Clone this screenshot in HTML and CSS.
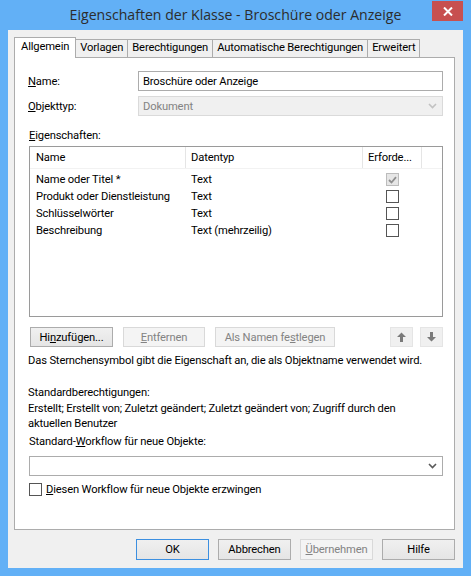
FILE: index.html
```html
<!DOCTYPE html>
<html lang="de">
<head>
<meta charset="utf-8">
<title>Eigenschaften der Klasse</title>
<link rel="stylesheet" href="styles.css">
</head>
<body>
<div class="window">
  <div class="titlebar">
    <div class="title">Eigenschaften der Klasse - Broschüre oder Anzeige</div>
    <div class="close">
      <svg width="10" height="9" viewBox="0 0 10 9"><path d="M1 0.5 L9 8.5 M9 0.5 L1 8.5" stroke="#fff" stroke-width="2"/></svg>
    </div>
  </div>
  <div class="client">
    <div class="tabs">
      <div class="tab active">Allgemein</div>
      <div class="tab">Vorlagen</div>
      <div class="tab">Berechtigungen</div>
      <div class="tab">Automatische Berechtigungen</div>
      <div class="tab">Erweitert</div>
    </div>
    <div class="panel">
      <div class="form-grid">
        <div class="label"><u>N</u>ame:</div>
        <div class="textbox">Broschüre oder Anzeige</div>
        <div class="label"><u>O</u>bjekttyp:</div>
        <div class="combo disabled"><span>Dokument</span>
          <svg width="9" height="6" viewBox="0 0 9 6"><path d="M1 1 L4.5 4.5 L8 1" fill="none" stroke="#c2c2c2" stroke-width="1.6"/></svg>
        </div>
      </div>

      <div class="section-label"><u>E</u>igenschaften:</div>
      <div class="listview">
        <div class="lv-row lv-header">
          <div class="c1">Name</div>
          <div class="c2">Datentyp</div>
          <div class="c3">Erforde...</div>
          <div class="c4"></div>
        </div>
        <div class="lv-body">
          <div class="lv-row">
            <div class="c1">Name oder Titel *</div>
            <div class="c2">Text</div>
            <div class="c3"><span class="check checked-disabled">
              <svg width="9" height="8" viewBox="0 0 9 8"><path d="M1 4 L3.5 6.5 L8 1.2" fill="none" stroke="#8f8f8f" stroke-width="1.8"/></svg>
            </span></div>
          </div>
          <div class="lv-row">
            <div class="c1">Produkt oder Dienstleistung</div>
            <div class="c2">Text</div>
            <div class="c3"><span class="check"></span></div>
          </div>
          <div class="lv-row">
            <div class="c1">Schlüsselwörter</div>
            <div class="c2">Text</div>
            <div class="c3"><span class="check"></span></div>
          </div>
          <div class="lv-row">
            <div class="c1">Beschreibung</div>
            <div class="c2">Text (mehrzeilig)</div>
            <div class="c3"><span class="check"></span></div>
          </div>
        </div>
      </div>

      <div class="btnrow">
        <div class="btn w-add">Hi<u>n</u>zufügen...</div>
        <div class="btn disabled w-rem"><u>E</u>ntfernen</div>
        <div class="btn disabled w-name">Als Namen fe<u>s</u>tlegen</div>
        <div class="spacer"></div>
        <div class="btn arrow">
          <svg width="9" height="10" viewBox="0 0 9 10"><path d="M4.5 0.5 L9 5 L6 5 L6 10 L3 10 L3 5 L0 5 Z" fill="#7a7a7a"/></svg>
        </div>
        <div class="btn arrow">
          <svg width="9" height="10" viewBox="0 0 9 10"><path d="M4.5 9.5 L9 5 L6 5 L6 0 L3 0 L3 5 L0 5 Z" fill="#7a7a7a"/></svg>
        </div>
      </div>

      <div class="hint">Das Sternchensymbol gibt die Eigenschaft an, die als Objektname verwendet wird.</div>

      <div class="text-block first">Standardberechtigungen:</div>
      <div class="text-block perm">Erstellt; Erstellt von; Zuletzt geändert; Zuletzt geändert von; Zugriff durch den aktuellen Benutzer</div>

      <div class="text-block wf-label">Standard-<u>W</u>orkflow für neue Objekte:</div>
      <div class="combo wide">
        <span></span>
        <svg width="9" height="6" viewBox="0 0 9 6"><path d="M1 1 L4.5 4.5 L8 1" fill="none" stroke="#5a5a5a" stroke-width="1.6"/></svg>
      </div>

      <div class="checkrow">
        <span class="check"></span>
        <span><u>D</u>iesen Workflow für neue Objekte erzwingen</span>
      </div>
    </div>

    <div class="footer">
      <div class="btn default">OK</div>
      <div class="btn">Abbrechen</div>
      <div class="btn disabled"><u>Ü</u>bernehmen</div>
      <div class="btn">Hilfe</div>
    </div>
  </div>
</div>
</body>
</html>
```

FILE: styles.css
```css
* { box-sizing: border-box; }

html, body {
  margin: 0;
  padding: 0;
  width: 471px;
  height: 576px;
  overflow: hidden;
  background: #62b0f6;
}

body {
  font-family: Roboto, "Noto Sans", sans-serif;
  font-size: 11.2px;
  letter-spacing: -0.15px;
  color: #000;
}

u { text-decoration: underline; text-underline-offset: 1px; }

.window {
  width: 471px;
  height: 576px;
  background: #62b0f6;
  padding: 0 8px 8px 8px;
  display: flex;
  flex-direction: column;
}

.titlebar {
  height: 31px;
  display: flex;
  align-items: flex-start;
  position: relative;
}

.title {
  flex: 1;
  text-align: center;
  font-family: "Open Sans", "Noto Sans", sans-serif;
  font-size: 14.1px;
  letter-spacing: 0;
  line-height: 30px;
  color: #2c2c2c;
}

.close {
  position: absolute;
  right: 0;
  top: 1px;
  width: 31px;
  height: 20px;
  background: #c75050;
  display: flex;
  align-items: center;
  justify-content: center;
}

.client {
  flex: 1;
  background: #f0f0f0;
  padding: 7px 8px 8px 6px;
  display: flex;
  flex-direction: column;
}

.tabs {
  display: flex;
  align-items: flex-end;
  height: 20px;
  position: relative;
  z-index: 1;
}

.tab {
  height: 18px;
  line-height: 16px;
  padding: 0 4px;
  border: 1px solid #acacac;
  border-bottom: none;
  background: #f0f0f0;
  margin-left: -1px;
  white-space: nowrap;
}

.tab.active {
  margin-left: 0;
  height: 21px;
  margin-bottom: -1px;
  background: #fff;
  padding: 1px 6px 0 6px;
  line-height: 16px;
  position: relative;
  z-index: 2;
}

.panel {
  height: 473px;
  background: #fff;
  border: 1px solid #acacac;
  padding: 13px 11px 0 13px;
}

.form-grid {
  display: grid;
  grid-template-columns: 110px 1fr;
  row-gap: 5px;
  align-items: center;
}

.label { line-height: 15px; }

.textbox, .combo {
  height: 20px;
  border: 1px solid #acacac;
  background: #fff;
  padding: 0 4px;
  display: flex;
  align-items: center;
  justify-content: space-between;
  line-height: 15px;
}

.combo.disabled {
  background: #f0f0f0;
  border-color: #dadada;
  color: #838383;
}

.combo svg { margin-right: 1px; }

.section-label {
  margin-top: 12px;
  margin-bottom: 3px;
  line-height: 15px;
  margin-left: 1px;
}

.listview {
  height: 171px;
  border: 1px solid #9a9a9a;
  margin-left: 1px;
  background: #fff;
}

.lv-row {
  display: grid;
  grid-template-columns: 156px 177px 59px 1fr;
  height: 17px;
  line-height: 17px;
}

.lv-row > div {
  white-space: nowrap;
  overflow: hidden;
}

.lv-row .c1 { padding-left: 6px; }
.lv-row .c2 { padding-left: 5px; }
.lv-row .c3 { display: flex; justify-content: center; align-items: center; }

.lv-header {
  height: 22px;
  line-height: 22px;
  border-bottom: 1px solid #f2f2f2;
}

.lv-header > div { border-right: 1px solid #e5e5e5; }
.lv-header .c3 { justify-content: flex-start; padding-left: 5px; }
.lv-header .c4 { border-right: none; }

.lv-body { padding-top: 2px; }

.check {
  width: 13px;
  height: 13px;
  border: 1px solid #555;
  background: #fff;
  display: inline-flex;
  align-items: center;
  justify-content: center;
  flex: none;
}

.check.checked-disabled {
  border-color: #bcbcbc;
  background: #e6e6e6;
}

.btnrow {
  display: flex;
  margin-top: 10px;
  margin-left: 2px;
  height: 20px;
}

.btn {
  height: 20px;
  border: 1px solid #acacac;
  background: linear-gradient(#f0f0f0, #e5e5e5);
  display: flex;
  align-items: center;
  justify-content: center;
  line-height: 15px;
  white-space: nowrap;
}

.btn.disabled {
  background: #f4f4f4;
  border-color: #d9d9d9;
  color: #838383;
}

.btnrow .btn { margin-right: 10px; }
.w-add { width: 83px; }
.w-rem { width: 82px; }
.w-name { width: 120px; }
.spacer { flex: 1; }
.btnrow .btn.arrow {
  width: 23px;
  margin-right: 0;
  margin-left: 7px;
  background: #f0f0f0;
  border-color: #e5e5e5;
}

.hint {
  margin-top: 6px;
  line-height: 15px;
  white-space: nowrap;
}

.text-block { line-height: 15px; }
.text-block.first { margin-top: 17px; margin-bottom: 1px; }
.text-block.perm { max-width: 395px; }
.wf-label { margin-top: 3px; margin-left: 1px; }

.combo.wide {
  margin-top: 7px;
  margin-left: 1px;
}

.checkrow {
  margin-top: 6px;
  margin-left: 1px;
  display: flex;
  align-items: center;
  gap: 4px;
  line-height: 15px;
}

.footer {
  display: flex;
  justify-content: flex-end;
  gap: 9px;
  margin-top: 9px;
}

.footer .btn { width: 73px; height: 21px; }
.footer .btn.default { border-color: #3c8fe0; }
```
